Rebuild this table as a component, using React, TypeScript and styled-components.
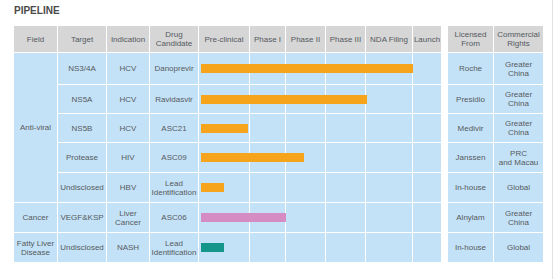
import React from 'react';
import styled, { createGlobalStyle } from 'styled-components';

const GlobalStyle = createGlobalStyle`
  body {
    margin: 0;
    background: #ffffff;
    font-family: "Liberation Sans", Arial, sans-serif;
  }
`;

const Page = styled.div`
  width: 553px;
  height: 279px;
  box-sizing: border-box;
  padding: 5px 0 0 14px;
  border-right: 1px solid #e2e2e2;
`;

const Title = styled.div`
  font-size: 10px;
  line-height: 12px;
  font-weight: 700;
  color: #4a4a4a;
  margin-bottom: 9px;
`;

const Table = styled.div`
  display: grid;
  width: 529px;
  grid-template-columns: 43px 48px 42px 48px 50px 35px 39px 39px 46px 28px 5px 45px 49px;
  grid-template-rows: 26px 31px 28px 28px 29px 29px 29px 29px;
  gap: 1px;
  background: #ffffff;
  color: #555a5e;
  font-size: 8px;
  line-height: 9px;
`;

const Cell = styled.div<{ $head?: boolean; $row: number; $col: number; $span?: number }>`
  display: flex;
  align-items: center;
  justify-content: center;
  text-align: center;
  white-space: pre-line;
  grid-column: ${(p) => p.$col};
  grid-row: ${(p) => p.$row} / span ${(p) => p.$span ?? 1};
  background: ${(p) => (p.$head ? '#d6d6d6' : '#c4e2f7')};
`;

const Bar = styled.div<{ $row: number; $color: string }>`
  grid-column: 5 / 11;
  grid-row: ${(p) => p.$row};
  align-self: center;
  height: 9px;
  margin-left: 2px;
  background: ${(p) => p.$color};
  z-index: 1;
`;

const ORANGE = '#f5a41c';
const PINK = '#d48cc3';
const TEAL = '#14968a';

const headers: [number, string][] = [
  [1, 'Field'],
  [2, 'Target'],
  [3, 'Indication'],
  [4, 'Drug\nCandidate'],
  [5, 'Pre-clinical'],
  [6, 'Phase I'],
  [7, 'Phase II'],
  [8, 'Phase III'],
  [9, 'NDA Filing'],
  [10, 'Launch'],
  [12, 'Licensed\nFrom'],
  [13, 'Commercial\nRights'],
];

const phaseCols = [5, 6, 7, 8, 9, 10];

interface Row {
  target: string;
  indication: string;
  drug: string;
  end: number;
  color: string;
  licensed: string;
  rights: string;
}

const rows: Row[] = [
  { target: 'NS3/4A', indication: 'HCV', drug: 'Danoprevir', end: 214, color: ORANGE, licensed: 'Roche', rights: 'Greater\nChina' },
  { target: 'NS5A', indication: 'HCV', drug: 'Ravidasvir', end: 168, color: ORANGE, licensed: 'Presidio', rights: 'Greater\nChina' },
  { target: 'NS5B', indication: 'HCV', drug: 'ASC21', end: 49, color: ORANGE, licensed: 'Medivir', rights: 'Greater\nChina' },
  { target: 'Protease', indication: 'HIV', drug: 'ASC09', end: 105, color: ORANGE, licensed: 'Janssen', rights: 'PRC\nand Macau' },
  { target: 'Undisclosed', indication: 'HBV', drug: 'Lead\nIdentification', end: 25, color: ORANGE, licensed: 'In-house', rights: 'Global' },
  { target: 'VEGF&KSP', indication: 'Liver\nCancer', drug: 'ASC06', end: 87, color: PINK, licensed: 'Alnylam', rights: 'Greater\nChina' },
  { target: 'Undisclosed', indication: 'NASH', drug: 'Lead\nIdentification', end: 25, color: TEAL, licensed: 'In-house', rights: 'Global' },
];

const fields: Record<number, { label: string; span: number }> = {
  0: { label: 'Anti-viral', span: 5 },
  5: { label: 'Cancer', span: 1 },
  6: { label: 'Fatty Liver\nDisease', span: 1 },
};

const App: React.FC = () => {
  return (
    <Page>
      <GlobalStyle />
      <Title>PIPELINE</Title>
      <Table>
        {headers.map(([col, h]) => (
          <Cell key={h} $head $row={1} $col={col}>
            {h}
          </Cell>
        ))}

        {rows.map((r, i) => {
          const row = i + 2;
          return (
            <React.Fragment key={i}>
              {fields[i] && (
                <Cell $row={row} $col={1} $span={fields[i].span}>
                  {fields[i].label}
                </Cell>
              )}
              <Cell $row={row} $col={2}>{r.target}</Cell>
              <Cell $row={row} $col={3}>{r.indication}</Cell>
              <Cell $row={row} $col={4}>{r.drug}</Cell>
              {phaseCols.map((c) => (
                <Cell key={c} $row={row} $col={c} />
              ))}
              <Cell $row={row} $col={12}>{r.licensed}</Cell>
              <Cell $row={row} $col={13}>{r.rights}</Cell>
              <Bar $row={row} $color={r.color} style={{ width: `${r.end - 2}px` }} />
            </React.Fragment>
          );
        })}
      </Table>
    </Page>
  );
};

export default App;
